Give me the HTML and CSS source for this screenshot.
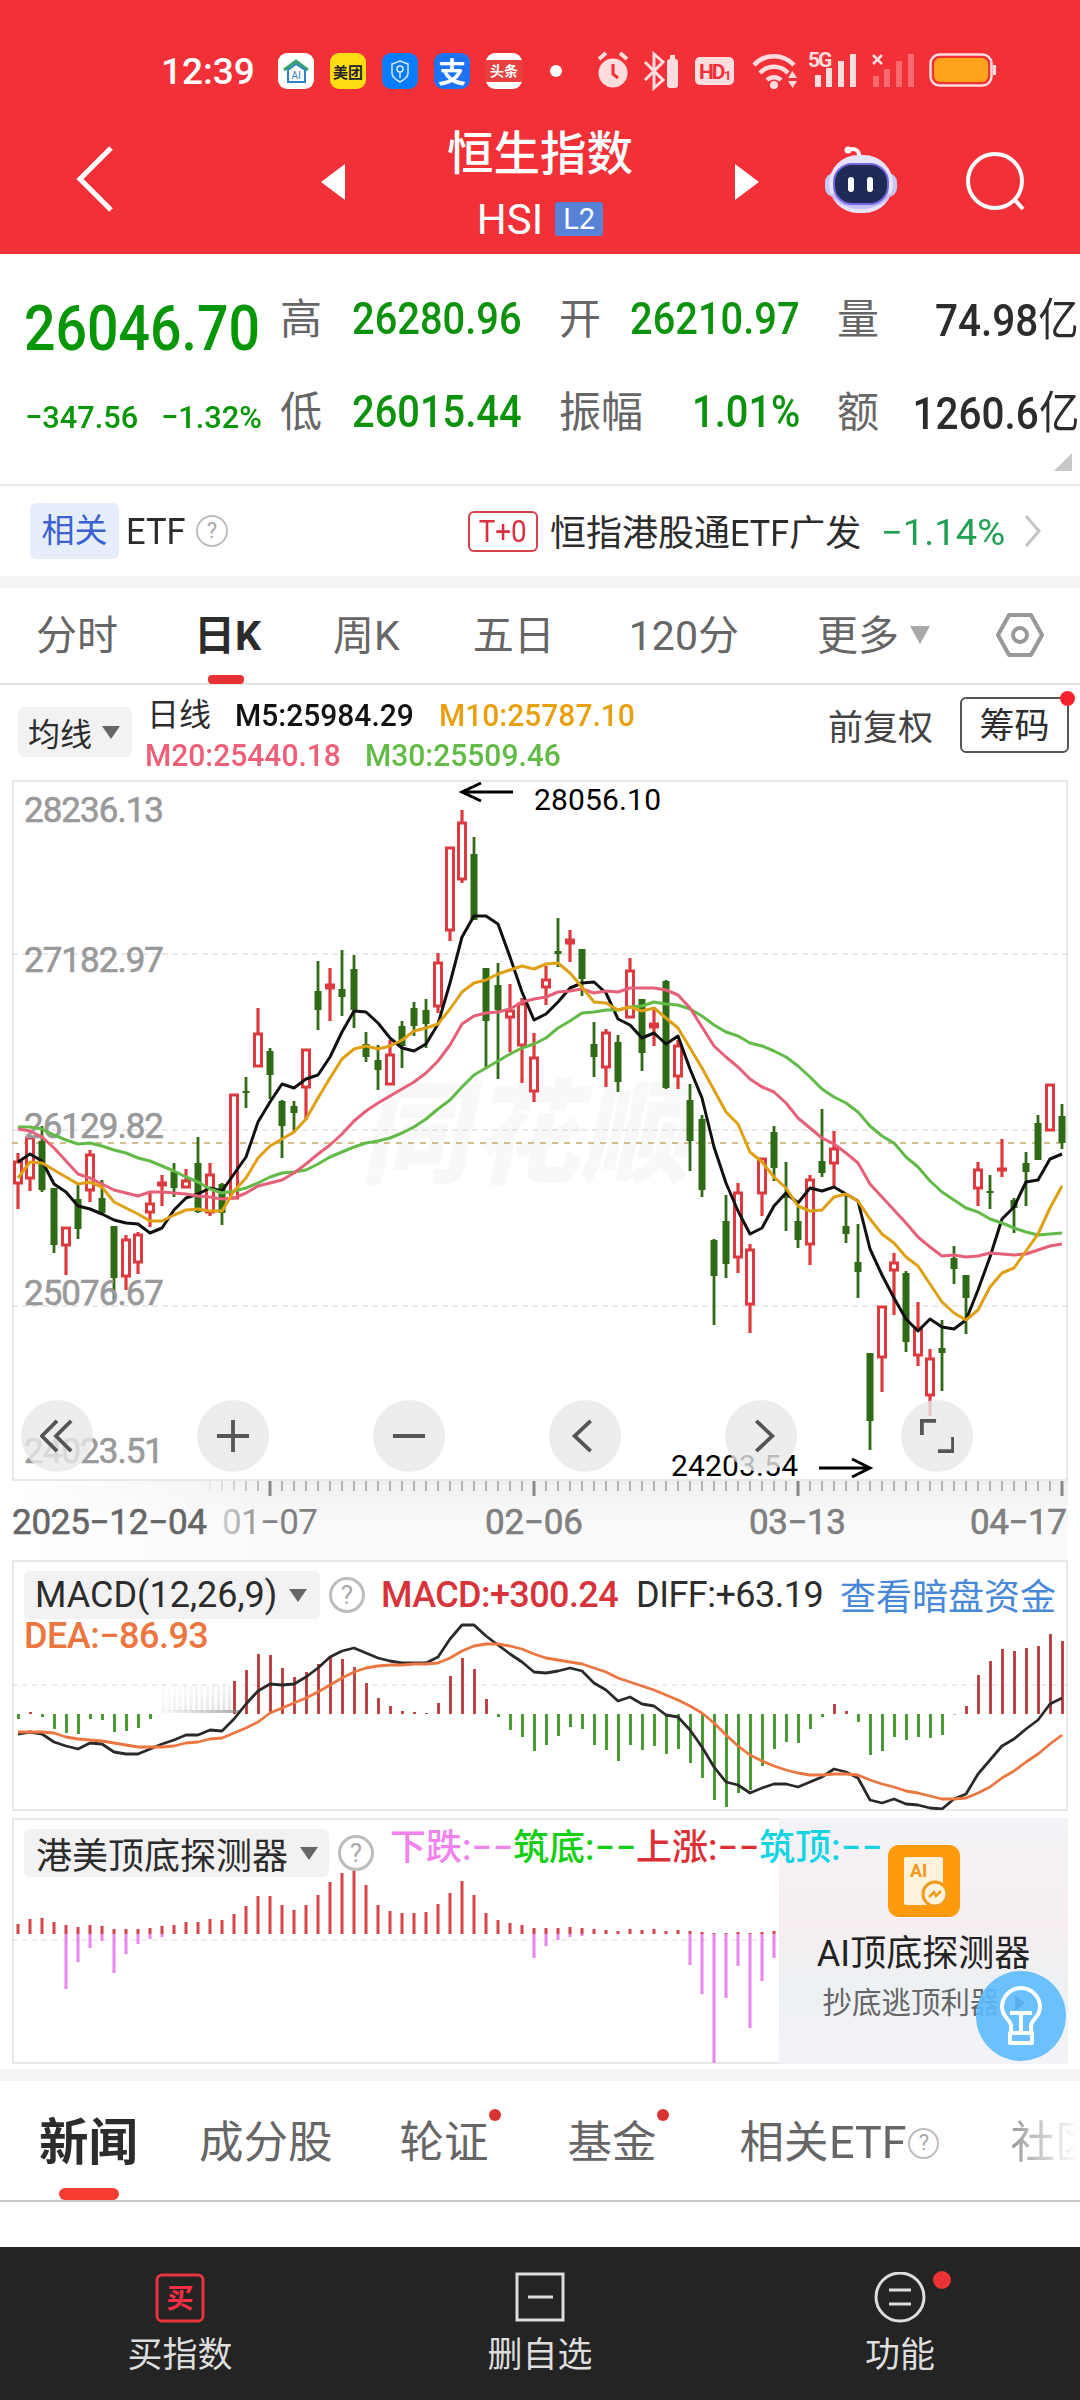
FILE: index.html
```
<!DOCTYPE html>
<html lang="zh-CN">
<head>
    <meta charset="UTF-8">
    <meta name="viewport" content="width=device-width, initial-scale=1.0">
    <title>恒生指数 HSI</title>
    <link rel="stylesheet" href="styles.css">
</head>
<body>
    <header class="header">
        <div class="status-bar">
            <span class="clock">12:39</span>
            <div class="app-icons">
                <span class="app app-ai">
                    <svg viewBox="0 0 36 36"><path d="M6 17 18 8l12 9" fill="none" stroke="#36a36b" stroke-width="3"/><path d="M10 17v12h17V17L18 11z" fill="none" stroke="#2f83c8" stroke-width="2"/><text x="18" y="26" font-size="10" text-anchor="middle" fill="#2f83c8">AI</text></svg>
                </span>
                <span class="app app-meituan">美团</span>
                <span class="app app-map">
                    <svg viewBox="0 0 36 36"><path d="M18 8l8 3v9c0 4-4 7-8 9-4-2-8-5-8-9v-9z" fill="none" stroke="#d5eaff" stroke-width="1.5"/><circle cx="18" cy="16" r="3" fill="none" stroke="#d5eaff" stroke-width="1.5"/><path d="M18 19v6" stroke="#d5eaff" stroke-width="1.5"/></svg>
                </span>
                <span class="app app-alipay">支</span>
                <span class="app app-toutiao"><b>头条</b></span>
            </div>
            <span class="status-dot"></span>
            <svg class="system-icons" viewBox="0 0 410 44">
                <g fill="#ffdcdd">
                    <!-- alarm -->
                    <circle cx="21" cy="24" r="14.5"/>
                    <path d="M7 10l7-6M35 10l-7-6" stroke="#ffdcdd" stroke-width="4"/>
                    <path d="M21 15v10l5 4" stroke="#f03038" stroke-width="3" fill="none"/>
                    <!-- bluetooth -->
                    <path d="M53 13l18 18-9 8V5l9 8-18 18" fill="none" stroke="#ffdcdd" stroke-width="3"/>
                    <rect x="75" y="10" width="11" height="29" rx="3"/>
                    <rect x="78" y="6" width="5" height="4"/>
                    <!-- hd -->
                    <rect x="103" y="8" width="39" height="28" rx="5"/>
                    <text class="hd-text" x="107" y="30">HD</text>
                    <text class="hd-sub" x="132" y="31">1</text>
                    <!-- wifi -->
                    <path d="M162 16a27 27 0 0 1 40 0M168 24a19 19 0 0 1 28 0M175 31a10 10 0 0 1 14 0" fill="none" stroke="#ffdcdd" stroke-width="4.5"/>
                    <circle cx="182" cy="36" r="4"/>
                    <path d="M196 29h9l-4.500-7zM196 32h9l-4.500 7z"/>
                    <!-- signal -->
                    <text class="g5" x="216" y="18">5G</text>
                    <rect x="223" y="26" width="6" height="12"/>
                    <rect x="234" y="19" width="6" height="19"/>
                    <rect x="246" y="12" width="6" height="26"/>
                    <rect x="258" y="5" width="6" height="33"/>
                    <path d="M281 6l9 9M290 6l-9 9" stroke="#ffdcdd" stroke-width="2.500"/>
                </g>
                <g fill="#f86a70">
                    <rect x="281" y="27" width="6" height="11"/>
                    <rect x="292" y="20" width="6" height="18"/>
                    <rect x="304" y="12" width="6" height="26"/>
                    <rect x="316" y="5" width="6" height="33"/>
                </g>
                <rect x="338.500" y="5.500" width="61" height="31" rx="9" fill="none" stroke="#ffdcdd" stroke-width="2.500"/>
                <rect x="342" y="9" width="54" height="24" rx="6" fill="#ffa31a"/>
                <path d="M402.500 16v10" stroke="#ffdcdd" stroke-width="3"/>
            </svg>
        </div>
        <div class="title-bar">
            <svg class="back" viewBox="0 0 40 68"><path d="M36 3 5 34l31 31" fill="none" stroke="#fff" stroke-width="5"/></svg>
            <svg class="prev" viewBox="0 0 24 36"><path d="M0 18 24 0v36z" fill="#fff"/></svg>
            <div class="title">
                <h1>恒生指数</h1>
                <div class="code">HSI <span class="level">L2</span></div>
            </div>
            <svg class="next" viewBox="0 0 24 36"><path d="M24 18 0 0v36z" fill="#fff"/></svg>
            <svg class="robot" viewBox="0 0 72 68">
                <path d="M23 4c8-3 11 1 12 8" fill="none" stroke="#fff" stroke-width="4"/>
                <circle cx="23" cy="4" r="3.500" fill="#fff"/>
                <rect x="0" y="27" width="72" height="24" rx="9" fill="#c9c6f2"/>
                <rect x="4" y="9" width="64" height="58" rx="29" fill="#e6e4fa"/>
                <path d="M6 48a31 20 0 0 0 60 0" fill="#c4bff5"/>
                <rect x="9" y="18" width="54" height="40" rx="18" fill="#1f2b56" stroke="#7668e0" stroke-width="2"/>
                <rect x="23" y="31" width="6" height="15" rx="3" fill="#fff"/>
                <rect x="42" y="31" width="6" height="15" rx="3" fill="#fff"/>
            </svg>
            <svg class="search" viewBox="0 0 64 64"><circle cx="31" cy="31" r="27" fill="none" stroke="#fff" stroke-width="4"/><path d="M50 49l9 10" stroke="#fff" stroke-width="4"/></svg>
        </div>
    </header>

    <section class="quote">
        <div class="last">
            <div class="price num">26046.70</div>
            <div class="change"><span class="num">−347.56</span><span class="num">−1.32%</span></div>
        </div>
        <div class="quote-grid">
            <div class="cell"><span>高</span><b class="num down">26280.96</b></div>
            <div class="cell"><span>开</span><b class="num down">26210.97</b></div>
            <div class="cell"><span>量</span><b class="num wide">74.98<i>亿</i></b></div>
            <div class="cell"><span>低</span><b class="num down">26015.44</b></div>
            <div class="cell"><span>振幅</span><b class="num down">1.01%</b></div>
            <div class="cell"><span>额</span><b class="num wide">1260.6<i>亿</i></b></div>
        </div>
        <span class="corner"></span>
    </section>

    <section class="etf-row">
        <span class="tag">相关</span>
        <span class="etf num">ETF</span>
        <span class="help">?</span>
        <span class="t0"><span class="num">T+0</span></span>
        <span class="etf-name">恒指港股通<span class="num">ETF</span>广发</span>
        <span class="etf-change num">−1.14%</span>
        <svg class="chevron" viewBox="0 0 18 34"><path d="M2 2l13 15L2 32" fill="none" stroke="#c4c4c4" stroke-width="3"/></svg>
    </section>

    <nav class="period-tabs">
        <a>分时</a>
        <a class="active">日K</a>
        <a>周K</a>
        <a>五日</a>
        <a>120分</a>
        <a>更多<i class="caret"></i></a>
        <svg viewBox="0 0 48 46"><path d="M13 3h22l11 20-11 20H13L2 23z" fill="none" stroke="#999" stroke-width="4" stroke-linejoin="round"/><circle cx="24" cy="23" r="7" fill="none" stroke="#999" stroke-width="4"/></svg>
    </nav>

    <section class="ma-bar">
        <span class="select ma-select">均线<i class="caret dark"></i></span>
        <div class="ma-values">
            <div><span class="ma-name">日线</span><span class="num m5">M5:25984.29</span><span class="num m10">M10:25787.10</span></div>
            <div><span class="num m20">M20:25440.18</span><span class="num m30">M30:25509.46</span></div>
        </div>
        <span class="adjust">前复权</span>
        <span class="chips">筹码</span>
    </section>

    <section class="kline">
        <svg id="kline" width="1056" height="702" viewBox="0 0 1056 702"></svg>
        <div class="tools">
            <button><svg viewBox="0 0 36 36"><path d="M18 2 2 18l16 16M33 2 17 18l16 16"/></svg></button>
            <button><svg viewBox="0 0 36 36"><path d="M18 1v34M1 18h34"/></svg></button>
            <button><svg viewBox="0 0 36 36"><path d="M1 18h34"/></svg></button>
            <button><svg viewBox="0 0 36 36"><path d="M24 2 7 18l17 16"/></svg></button>
            <button><svg viewBox="0 0 36 36"><path d="M13 2l17 16-17 16"/></svg></button>
            <button><svg viewBox="0 0 36 36"><path d="M2 17V2h15M35 19v15H19"/></svg></button>
        </div>
    </section>
    <section class="dates">
        <svg id="ruler" width="1056" height="80" viewBox="0 0 1056 80"></svg>
    </section>

    <section class="panel macd">
        <svg id="macd" width="1056" height="250" viewBox="0 0 1056 250"></svg>
        <div class="panel-head">
            <span class="select">MACD(12,26,9)<i class="caret dark"></i></span>
            <span class="help">?</span>
            <span class="macd-value">MACD:+300.24</span>
            <span class="diff-value">DIFF:+63.19</span>
            <a class="link">查看暗盘资金</a>
        </div>
        <div class="dea-value">DEA:−86.93</div>
    </section>

    <section class="panel detector">
        <svg id="detector" width="1056" height="246" viewBox="0 0 1056 246"></svg>
        <div class="promo">
            <svg class="promo-icon" viewBox="0 0 72 72">
                <rect width="72" height="72" rx="11" fill="#ff9a0c"/>
                <rect x="16" y="12" width="39" height="48" rx="2" fill="#fff3dc"/>
                <text x="22" y="32" font-size="18" font-weight="700" fill="#f09a1a">AI</text>
                <circle cx="47" cy="49" r="12" fill="#fff3dc" stroke="#f09a1a" stroke-width="3"/>
                <path d="M41 52l5-5 2 4 5-5" fill="none" stroke="#f09a1a" stroke-width="2.500"/>
            </svg>
            <strong>AI顶底探测器</strong>
            <small>抄底逃顶利器<i></i></small>
        </div>
        <div class="panel-head">
            <span class="select">港美顶底探测器<i class="caret dark"></i></span>
            <span class="help">?</span>
            <div class="signals">
                <span class="fall">下跌:<em>−−</em></span>
                <span class="bottom">筑底:<em>−−</em></span>
                <span class="rise">上涨:<em>−−</em></span>
                <span class="top">筑顶:<em>−−</em></span>
            </div>
        </div>
        <span class="bulb">
            <svg viewBox="0 0 44 60" fill="none" stroke="#fff" stroke-width="4"><path d="M12 47V40C12 34 3 31 3 21a19 19 0 0 1 38 0c0 10-9 13-9 19v7M11 27h22M22 27v20M11 47h22v10H11z" stroke-linejoin="round"/></svg>
        </span>
    </section>

    <nav class="news-tabs">
        <a class="active">新闻</a>
        <a>成分股</a>
        <a class="dot">轮证</a>
        <a class="dot">基金</a>
        <a>相关<span class="num">ETF</span><span class="help">?</span></a>
        <a class="faded">社区</a>
    </nav>

    <footer class="bottom-bar">
        <a>
            <svg viewBox="0 0 52 52"><rect x="3" y="3" width="46" height="46" rx="5" fill="none" stroke="#e8343c" stroke-width="3"/><text x="26" y="36" font-size="27" font-weight="700" text-anchor="middle" fill="#ff2d45">买</text></svg>
            买指数
        </a>
        <a>
            <svg viewBox="0 0 52 52" stroke="#ddd" stroke-width="3"><rect x="3" y="2" width="46" height="46" fill="none"/><path d="M14 25h25"/></svg>
            删自选
        </a>
        <a class="dot">
            <svg viewBox="0 0 52 52" stroke="#ddd" stroke-width="3"><circle cx="26" cy="25" r="24" fill="none"/><path d="M15 18h22M15 32h22"/></svg>
            功能
        </a>
    </footer>
    <script src="chart.js"></script>
</body>
</html>
```
FILE: styles.css
```
* {
    margin: 0;
    padding: 0;
    box-sizing: border-box;
}

body {
    width: 1080px;
    height: 2400px;
    overflow: hidden;
    background: #fff;
    color: #2c2c2c;
    font-family: Roboto, "Noto Sans CJK SC", sans-serif;
    white-space: nowrap;
}

i, em {
    font-style: normal;
}

/* narrow figures */
.num {
    display: inline-block;
    transform: scaleX(0.895);
    transform-origin: left center;
}

.caret {
    display: inline-block;
    border: 10px solid transparent;
    border-top: 18px solid #a8a8a8;
    border-bottom: 0;
}

.caret.dark {
    border-width: 13px 9px 0;
    border-top-color: #666;
}

.help {
    display: inline-flex;
    align-items: center;
    justify-content: center;
    width: 36px;
    height: 36px;
    border: 3px solid #bdbdbd;
    border-radius: 50%;
    color: #aaa;
    font-size: 26px;
    line-height: 1;
}

/* header */
.header {
    height: 254px;
    background: #f23038;
    color: #fff;
}

.status-bar {
    display: flex;
    align-items: center;
    height: 142px;
    padding-left: 161px;
}

.clock {
    width: 117px;
    font-size: 37px;
    font-weight: 500;
}

.app-icons {
    display: flex;
    gap: 16px;
}

.app {
    display: flex;
    align-items: center;
    justify-content: center;
    width: 36px;
    height: 36px;
    border-radius: 9px;
    overflow: hidden;
}

.app-ai {
    background: #fff;
}

.app-meituan {
    background: #ffdd14;
    color: #222;
    font-size: 15px;
    font-weight: 700;
}

.app-map {
    background: #0a7cff;
}

.app-alipay {
    background: #1c74f4;
    font-size: 28px;
    font-weight: 700;
}

.app-toutiao {
    background: #fff;
}

.app-toutiao b {
    width: 36px;
    background: #e8403e;
    font-size: 14px;
    line-height: 22px;
    text-align: center;
}

.status-dot {
    width: 12px;
    height: 12px;
    margin: 0 29px 0 28px;
    border-radius: 50%;
    background: #fff;
}

.system-icons {
    width: 410px;
    height: 44px;
    margin-left: 1px;
    overflow: visible;
}

.hd-text {
    fill: #f23038;
    font-size: 21px;
    font-weight: 700;
    letter-spacing: -2px;
}

.hd-sub {
    fill: #f23038;
    font-size: 13px;
    font-weight: 700;
}

.g5 {
    font-size: 21px;
    font-weight: 700;
    letter-spacing: -2px;
}

.title-bar {
    display: flex;
    height: 112px;
    padding-left: 75px;
}

.back {
    width: 40px;
    height: 68px;
    margin-top: 3px;
}

.prev,
.next {
    width: 24px;
    height: 36px;
    margin-top: 22px;
}

.prev {
    margin-left: 206px;
}

.title {
    width: 390px;
    text-align: center;
    margin-top: -22px;
}

.title h1 {
    font-size: 46.5px;
    font-weight: 500;
    line-height: 68px;
}

.code {
    display: flex;
    align-items: center;
    justify-content: center;
    gap: 12px;
    height: 62px;
    font-size: 42px;
}

.level {
    width: 48px;
    height: 34px;
    border-radius: 3px;
    background: #5682d8;
    font-size: 29px;
    line-height: 35px;
}

.robot {
    width: 72px;
    height: 68px;
    margin: 4px 0 0 66px;
}

.search {
    width: 64px;
    height: 64px;
    margin: 8px 0 0 67px;
}

/* quote */
.quote {
    position: relative;
    display: flex;
    height: 232px;
    padding: 17px 0 0 26px;
    border-bottom: 2px solid #ebebeb;
}

.last {
    width: 254px;
    color: #069606;
    font-weight: 500;
}

.price {
    height: 93px;
    margin-left: -2px;
    font-size: 63px;
    line-height: 115px;
    transform: scaleX(0.88);
}

.change {
    display: flex;
    margin-left: -1px;
    font-size: 32px;
    line-height: 106px;
}

.change .num {
    flex: none;
    width: 136px;
    transform: scaleX(0.96);
}

.quote-grid {
    display: grid;
    grid-template-columns: 242px 241px 242px;
    grid-auto-rows: 93px;
    column-gap: 37px;
}

.cell {
    display: flex;
    justify-content: space-between;
    align-items: center;
    color: #666;
    font-size: 42px;
}

.cell span {
    margin-top: -4px;
}

.cell .num {
    color: #2c2c2c;
    font-size: 45px;
    font-weight: 500;
    transform: scaleX(0.885);
    transform-origin: right center;
}

.cell .wide {
    margin-top: -3px;
    transform: scaleX(0.9);
}

.cell .num i {
    font-weight: 400;
}

.cell .down {
    margin-top: 1px;
    color: #0d920d;
}

.corner {
    position: absolute;
    right: 8px;
    bottom: 13px;
    border: 9px solid #c8c8c8;
    border-top-color: transparent;
    border-left-color: transparent;
}

/* related etf */
.etf-row {
    display: flex;
    align-items: center;
    height: 102px;
    padding: 0 0 0 30px;
    border-bottom: 12px solid #f4f4f4;
    font-size: 36px;
}

.tag {
    width: 89px;
    margin-right: 7px;
    border-radius: 6px;
    background: #e6edfb;
    color: #3b62cf;
    font-size: 33px;
    line-height: 56px;
    text-align: center;
}

.etf {
    width: 70px;
    margin-top: 2px;
    transform: scaleX(0.96);
}

.etf-row .help {
    width: 32px;
    height: 32px;
    border-width: 2px;
    font-size: 22px;
}

.t0 {
    width: 70px;
    height: 41px;
    margin: 0 12px 0 240px;
    border: 2px solid #d8404a;
    border-radius: 6px;
    color: #d8303c;
    font-size: 31px;
    line-height: 37px;
    text-align: center;
}

.t0 .num {
    transform-origin: center;
}

.etf-name {
    width: 331px;
    margin-top: -2px;
}

.etf-name .num {
    margin-right: -3px;
    transform: scaleX(0.95);
}

.etf-change {
    width: 143px;
    margin-top: 3px;
    color: #1fa052;
    transform: scaleX(1.06);
}

.chevron {
    width: 18px;
    height: 34px;
}

/* period tabs */
.period-tabs {
    display: flex;
    align-items: center;
    gap: 74px;
    height: 97px;
    padding-left: 36px;
    border-bottom: 2px solid #e4e4e4;
    color: #666;
    font-size: 41px;
    line-height: 60px;
}

.period-tabs a,
.news-tabs a {
    position: relative;
}

.period-tabs .caret {
    margin: 0 0 6px 11px;
}

.period-tabs .active {
    margin-left: 2px;
    margin-right: -2px;
    color: #2c2c2c;
    font-weight: 700;
}

.period-tabs .active::after {
    content: "";
    position: absolute;
    left: 14px;
    bottom: -18px;
    width: 36px;
    height: 9px;
    border-radius: 4px;
    background: #e63232;
}

.period-tabs a:nth-child(4) {
    margin-left: -1px;
}

.period-tabs a:nth-child(6) {
    margin-left: 4px;
}

.period-tabs svg {
    width: 48px;
    height: 46px;
    margin: -1px 0 0 -8px;
}

/* moving averages */
.ma-bar {
    display: flex;
    height: 95px;
    padding-left: 18px;
    font-size: 32px;
}

.select {
    display: inline-flex;
    align-items: center;
    height: 48px;
    border-radius: 6px;
    background: #f2f2f2;
}

.ma-select {
    width: 114px;
    height: 50px;
    margin-top: 22px;
    padding-left: 10px;
}

.ma-select .caret {
    margin-left: 10px;
}

.ma-values {
    flex: none;
    width: 696px;
    padding-left: 15px;
}

.ma-values div {
    display: flex;
    height: 40px;
    line-height: 40px;
}

.ma-values div:first-child {
    margin-top: 10px;
}

.ma-values .num {
    font-weight: 500;
    transform: scaleX(0.937);
}

.ma-name {
    width: 88px;
}

.m5 {
    width: 204px;
    color: #111;
}

.m10 {
    color: #e8a010;
}

.m20 {
    width: 220px;
    margin-left: -2px;
    color: #ee5f78;
}

.m30 {
    color: #62bb46;
}

.adjust {
    width: 132px;
    color: #444;
    font-size: 35px;
    line-height: 88px;
}

.chips {
    position: relative;
    flex: none;
    width: 109px;
    height: 56px;
    margin-top: 12px;
    border: 2px solid #555;
    border-radius: 6px;
    font-size: 35px;
    line-height: 56px;
    text-align: center;
}

.chips::after,
.dot::after {
    content: "";
    position: absolute;
    top: -8px;
    right: -8px;
    width: 15px;
    height: 15px;
    border-radius: 50%;
    background: #f8222e;
}

/* charts */
.kline {
    position: relative;
    height: 700px;
    margin: 0 12px;
}

.kline svg,
.dates svg,
.panel svg {
    display: block;
}

.scale {
    fill: #999;
    font-size: 35px;
}

.peak {
    fill: #000;
    font-size: 30px;
}

.watermark {
    fill: #f8f8f8;
    font-size: 112px;
    font-weight: 900;
}

.tools {
    position: absolute;
    left: 9px;
    bottom: 8px;
    display: flex;
    gap: 104px;
}

.tools button {
    display: flex;
    align-items: center;
    justify-content: center;
    width: 72px;
    height: 72px;
    border: 0;
    border-radius: 50%;
    background: rgba(232, 232, 232, 0.8);
}

.tools svg {
    width: 34px;
    height: 34px;
    fill: none;
    stroke: #555;
    stroke-width: 4;
}

.dates {
    height: 80px;
    margin: 0 12px;
    background: linear-gradient(90deg, #fff, transparent 25%), linear-gradient(#f1f1f1, #fafafa 60%);
}

.date {
    fill: #808080;
    stroke: #808080;
    stroke-width: 0.6;
    font-size: 35px;
}

.date.first {
    fill: #666;
    stroke: #666;
}

.date.fading {
    fill: url(#fade);
    stroke: none;
}

.panel {
    position: relative;
    height: 251px;
    margin: 0 12px 7px;
    border: 2px solid #e8e8e8;
    font-size: 36px;
}

.panel > svg {
    position: absolute;
    left: -2px;
    top: -2px;
}

.panel-head {
    position: relative;
    display: flex;
    align-items: center;
    height: 48px;
    margin: 9px 0 0 10px;
}

.macd .select {
    width: 296px;
    padding-left: 11px;
}

.panel .caret {
    margin-left: 12px;
}

.panel .help {
    margin: 0 16px 0 9px;
}

.macd-value {
    width: 255px;
    color: #d8333a;
    letter-spacing: -0.6px;
    font-weight: 500;
}

.diff-value {
    width: 204px;
    letter-spacing: -0.5px;
}

.link {
    color: #4788d8;
}

.macd .link {
    margin-top: -3px;
}

.dea-value {
    position: relative;
    margin-left: 10px;
    color: #ec7640;
    font-weight: 500;
    letter-spacing: -0.5px;
    line-height: 35px;
}

.detector {
    height: 246px;
    margin-bottom: 5px;
}

.detector .select {
    width: 305px;
    padding-left: 12px;
}

.signals {
    display: flex;
    margin: -10px 0 0 0;
}

.signals span {
    display: flex;
    align-items: center;
    width: 123px;
    font-weight: 500;
    line-height: 46px;
}

.signals em {
    letter-spacing: 1px;
}

.fall {
    color: #f283ee;
}

.bottom {
    color: #14cf14;
}

.rise {
    color: #dc3036;
}

.top {
    color: #14d3e3;
}

.promo {
    position: absolute;
    top: -2px;
    right: -2px;
    display: flex;
    flex-direction: column;
    align-items: center;
    width: 289px;
    height: 246px;
    background: linear-gradient(#f4f3f7 0, #f6eef1 45%, #edf1f3 68%, #f4f3f8);
}

.promo-icon {
    width: 72px;
    height: 72px;
    margin-top: 27px;
}

.promo strong {
    margin-top: 15px;
    color: #222;
    font-weight: 400;
    line-height: 44px;
}

.promo small {
    display: flex;
    align-items: center;
    margin: 8px 0 0 0;
    color: #666;
    font-size: 29.5px;
    line-height: 38px;
}

.promo small i {
    margin-left: 15px;
    border: 8px solid transparent;
    border-left: 10px solid #333;
    border-right: 0;
}

.bulb {
    position: absolute;
    right: 0;
    bottom: 1px;
    display: flex;
    align-items: center;
    justify-content: center;
    width: 90px;
    height: 90px;
    border-radius: 50%;
    background: rgba(92, 186, 255, 0.9);
}

.bulb svg {
    width: 44px;
    height: 60px;
}

/* news tabs */
.news-tabs {
    display: flex;
    align-items: center;
    height: 133px;
    padding-left: 39px;
    border-top: 12px solid #f4f4f4;
    border-bottom: 2px solid #c2c8c8;
    color: #666;
    font-size: 44.5px;
}

.news-tabs a {
    flex: none;
    padding-top: 5px;
    margin-right: 79px;
    line-height: 114px;
}

.news-tabs .active {
    margin-right: 61px;
    color: #2c2c2c;
    font-size: 49.5px;
    font-weight: 700;
}

.news-tabs a:nth-child(2) {
    margin-right: 67px;
}

.news-tabs a:nth-child(5) {
    display: flex;
    align-items: center;
    margin: 0 71px 0 4px;
}

.news-tabs .num {
    margin-right: 3px;
    transform: scaleX(1.01);
}

.news-tabs .active::after {
    content: "";
    position: absolute;
    left: 20px;
    bottom: 0;
    width: 60px;
    height: 12px;
    border-radius: 6px;
    background: #f83c30;
}

.news-tabs .dot::after {
    top: 28px;
    right: -12px;
    width: 12px;
    height: 12px;
    background: #d83434;
}

.news-tabs .help {
    width: 31px;
    height: 31px;
    border-width: 2px;
    font-size: 22px;
}

.news-tabs .faded {
    margin: 0;
    background: linear-gradient(90deg, #999, #fff 75%);
    -webkit-background-clip: text;
    background-clip: text;
    color: transparent;
}

/* bottom bar */
.bottom-bar {
    display: flex;
    height: 153px;
    margin-top: 45px;
    background: #242424;
    color: #ddd;
    font-size: 35px;
}

.bottom-bar a {
    position: relative;
    display: flex;
    flex: 1;
    flex-direction: column;
    align-items: center;
    padding-top: 25px;
    line-height: 64px;
}

.bottom-bar svg {
    width: 52px;
    height: 52px;
}

.bottom-bar .dot::after {
    top: 24px;
    right: 129px;
    width: 18px;
    height: 18px;
    background: #ec3434;
}
```
FILE: chart.js
```
const RED = '#dc3a3e';
const GREEN = '#2f6a16';

const x = i => 6 + 12 * i;

function line(values, color, width = 3) {
    const points = values.map((y, i) => x(i) + ',' + y).join(' ');
    return `<polyline points="${points}" fill="none" stroke="${color}" stroke-width="${width}" stroke-linejoin="round"/>`;
}

function rule(y, color, dash, width = 1) {
    return `<path d="M0 ${y}H1056" stroke="${color}" stroke-width="${width}" stroke-dasharray="${dash}"/>`;
}

// up/down, high, body top, body bottom, low
const candles = [
    ['u',373,381,404,429], ['u',357,357,399,411], ['d',346,361,410,412], ['d',408,408,465,473],
    ['u',447,447,466,495], ['d',405,419,449,459], ['u',370,374,411,422], ['d',400,418,433,435],
    ['d',446,446,498,520], ['u',455,459,497,510], ['u',452,454,483,494], ['u',413,423,433,447],
    ['u',395,402,406,426], ['d',383,392,408,417], ['u',389,400,408,408], ['d',357,383,432,433],
    ['u',383,394,433,436], ['d',403,404,433,445], ['u',314,314,419,419], ['d',297,311,313,328],
    ['u',228,253,287,287], ['d',268,271,295,319], ['d',320,321,346,378], ['d',321,326,333,352],
    ['u',269,269,308,340], ['d',181,211,230,250], ['u',188,204,209,241], ['d',170,209,217,236],
    ['d',175,189,230,248], ['d',252,264,277,282], ['d',265,280,290,310], ['u',260,274,305,305],
    ['d',241,246,266,288], ['d',222,228,246,256], ['d',219,230,244,268], ['u',173,182,227,233],
    ['u',67,67,151,161], ['u',30,42,100,103], ['d',57,74,140,140], ['d',188,188,241,288],
    ['d',183,205,230,299], ['u',204,230,238,272], ['u',218,223,266,303], ['u',253,277,312,322],
    ['u',186,199,208,225], ['d',138,171,174,187], ['u',150,159,164,182], ['d',169,169,199,216],
    ['d',242,264,277,297], ['u',249,252,288,307], ['d',255,262,302,312], ['u',178,190,238,238],
    ['d',219,219,273,291], ['u',227,243,248,266], ['d',200,201,308,309], ['u',260,265,297,309],
    ['d',304,320,361,391], ['d',335,339,410,417], ['d',459,460,496,545], ['d',415,441,484,498],
    ['u',403,412,478,493], ['u',464,469,525,553], ['u',378,378,414,436], ['d',346,352,388,401],
    ['d',382,414,418,451], ['d',427,441,460,468], ['u',395,399,465,485], ['d',329,381,393,397],
    ['u',351,368,384,407], ['d',415,446,454,463], ['d',444,482,492,518], ['d',573,573,641,670],
    ['u',526,526,578,612], ['u',473,482,491,535], ['d',491,493,562,572], ['u',522,547,576,586],
    ['u',569,578,616,636], ['d',540,568,573,611], ['d',466,478,489,504], ['d',495,495,518,554],
    ['u',382,389,409,426], ['d',395,411,413,429], ['u',359,388,391,397], ['d',418,420,428,453],
    ['d',372,383,392,426], ['d',335,343,380,380], ['u',304,304,351,351], ['d',324,336,363,369]
];

const m5 = [382,374,381,404,412,426,429,434,440,443,444,453,448,430,418,414,408,411,394,377,342,322,304,308,299,295,277,252,231,232,243,258,268,271,264,244,203,157,136,136,144,177,212,240,234,222,208,203,202,213,239,245,258,253,264,256,289,318,367,403,431,454,448,426,413,423,408,411,407,414,421,469,495,518,539,551,539,547,549,540,510,477,439,427,402,400,379,374];
const m10 = [398,382,383,390,397,404,402,407,422,428,434,441,441,435,430,429,431,431,411,398,378,366,359,352,339,318,298,279,269,266,269,266,260,251,248,244,229,212,203,200,194,190,186,189,184,183,193,207,222,223,230,227,231,228,238,248,268,288,310,332,344,372,382,397,408,426,431,430,417,414,421,439,454,463,477,486,504,522,533,540,530,507,493,488,471,454,428,406];
const m20 = [349,351,357,368,381,394,398,404,410,413,416,412,412,413,414,416,417,419,418,413,406,403,400,393,384,374,365,354,341,331,323,316,309,302,293,281,265,244,236,233,232,229,222,219,217,212,211,209,213,211,212,208,208,208,210,215,228,247,266,277,287,299,307,312,323,338,348,358,364,373,383,404,417,430,443,457,467,476,475,477,476,473,474,475,474,470,466,464];
const m30 = [347,347,349,355,360,364,363,366,370,373,378,381,386,391,397,402,409,413,411,408,403,397,393,392,390,384,377,372,367,363,361,358,353,347,339,329,320,307,295,288,281,274,268,264,258,248,241,233,232,230,230,227,226,222,224,225,229,236,245,252,256,263,266,271,277,286,297,309,317,323,332,346,356,363,377,387,401,412,420,428,432,439,443,448,452,455,454,453];

function drawKline() {
    let out = '<rect x="1" y="1" width="1054" height="699" fill="none" stroke="#e8e8e8" stroke-width="2"/>';
    out += '<text class="watermark" transform="translate(348 394) skewX(-12)" textLength="330" lengthAdjust="spacingAndGlyphs">同花顺</text>';
    out += rule(174, '#d4d4d4', '6 4') + rule(350, '#d4d4d4', '6 4') + rule(526, '#d4d4d4', '6 4');
    out += rule(363, '#c4a86a', '6 6', 1.6);
    candles.forEach(([dir, high, top, bottom, low], i) => {
        const cx = x(i);
        if (dir === 'u') {
            out += `<path d="M${cx} ${high}V${top}M${cx} ${bottom}V${low}" stroke="${RED}" stroke-width="3.2"/>`;
            out += `<rect x="${cx - 3.5}" y="${top + 1}" width="7" height="${Math.max(bottom - top - 2, 1)}" fill="${bottom - top < 6 ? RED : '#fff'}" stroke="${RED}" stroke-width="3"/>`;
        } else {
            out += `<path d="M${cx} ${high}V${low}" stroke="${GREEN}" stroke-width="2.8"/>`;
            out += `<rect x="${cx - 3.5}" y="${top}" width="7" height="${bottom - top}" fill="${GREEN}"/>`;
        }
    });
    [['28236.13', 42], ['27182.97', 192], ['26129.82', 358], ['25076.67', 525], ['24023.51', 683]].forEach(([label, y]) => {
        out += `<text class="scale" x="12" y="${y}" textLength="140" stroke="#999" stroke-width="0.6">${label}</text>`;
    });
    out += line(m5, '#111') + line(m30, '#62bb46') + line(m20, '#e6607a') + line(m10, '#dfa013');
    out += '<path d="M501 12H450M469 3 450 12l19 9" fill="none" stroke="#000" stroke-width="3"/>';
    out += '<text class="peak" x="522" y="30" textLength="127">28056.10</text>';
    out += '<path d="M807 688h51M840 679l18 9-18 9" fill="none" stroke="#000" stroke-width="3"/>';
    out += '<text class="peak" x="659" y="696" textLength="127">24203.54</text>';
    document.getElementById('kline').innerHTML = out;
}

function drawRuler() {
    let out = '';
    for (let i = 16; i < 88; i++) {
        const major = (i - 21) % 22 === 0;
        const opacity = major ? 1 : Math.min(1, (i - 15) / 6);
        out += `<path d="M${x(i)} 1V${major ? 16 : 11}" stroke="#888" stroke-width="${major ? 3 : 1.2}" opacity="${opacity}"/>`;
    }
    out += '<defs><linearGradient id="fade"><stop offset="0" stop-color="#d0d0d0"/><stop offset="0.5" stop-color="#808080"/></linearGradient></defs>';
    out += '<text class="date first" x="0" y="54" textLength="195">2025−12−04</text>';
    out += '<text class="date fading" x="210" y="54" textLength="96">01−07</text>';
    out += '<text class="date" x="473" y="54" textLength="98">02−06</text>';
    out += '<text class="date" x="737" y="54" textLength="97">03−13</text>';
    out += '<text class="date" x="958" y="54" textLength="97">04−17</text>';
    document.getElementById('ruler').innerHTML = out;
}

const bars = [159,152,157,169,173,174,159,160,172,171,168,159,null,null,null,null,null,null,121,110,94,95,108,117,112,104,97,99,107,123,138,146,151,152,153,143,116,98,109,139,157,170,177,191,185,176,167,169,185,190,201,185,190,186,194,189,203,218,240,247,233,230,206,189,182,183,169,157,144,151,162,195,191,177,180,177,178,175,154.5,146,115,101,89,91,88,86,74,81];
const diff = [174,172,174,182,186,189,183,184,192,194,194,189,184,180,175,175,170,171,159,144,131,124,125,124,117,108,97,91,88,93,98,101,103,103,103,97,79,65,65,76,85,94,102,112,113,111,108,111,123,130,141,137,144,146,155,157,170,187,207,222,225,233,228,224,224,227,222,217,209,212,218,240,243,239,244,245,248,249,239,234,214,200,186,179,169,160,144,138];
const dea = [172,172,172,173,177,179,180,181,183,185,187,187,187,186,183,182,179,178,173,168,162,153,148,143,138,132,125,118,112,108,106,105,105,104,104,103,98,91,86,84,84,86,89,94,98,100,102,104,108,112,118,122,126,130,135,140,146,153,163,175,186,195,201,206,210,213,215,215,214,214,215,220,224,227,231,233,236,239,239,238,233,227,218,211,202,194,184,175];

function drawMacd() {
    let out = rule(125, '#dcdcdc', '5 5');
    bars.forEach((y, i) => {
        if (y === null) return;
        out += `<path d="M${x(i) + 0.5} 154V${y}" stroke="${y < 154 ? '#b8393b' : '#3e9428'}" stroke-width="2.8"/>`;
    });
    out += '<defs><linearGradient id="ghost"><stop offset="0" stop-color="#999" stop-opacity="0"/><stop offset="1" stop-color="#888" stop-opacity="0.7"/></linearGradient>';
    out += '<linearGradient id="smear" x2="0" y2="1"><stop offset="0" stop-color="#ccc" stop-opacity="0.2"/><stop offset="1" stop-color="#bbb" stop-opacity="0.5"/></linearGradient></defs>';
    for (let i = 0; i < 13; i++) {
        out += `<rect x="${150 + i * 5.5}" y="125" width="3" height="26" fill="url(#smear)" opacity="${0.3 + i * 0.05}"/>`;
    }
    out += '<rect x="145" y="150" width="84" height="3" fill="url(#ghost)"/>';
    out += line(diff, '#2a2a2a', 2.8) + line(dea, '#ec7640', 2.8);
    document.getElementById('macd').innerHTML = out;
}

const risk = [106,101,100,104,107,109,107,108,111,111,111,110,108,107,104,104,101,102,96,88,78,78,87,92,87,77,64,55,52,67,87,93,95,95,94,86,75,63,77,95,102,105,107,110,110,110,109,110,111,112,113,111,112,111,113,112,113,114,115,115,114,115,114,113];
const drops = {4:171,5:144,6:130,7:123,8:155,9:136,10:126,11:121,12:119,43:140,44:128,45:122,46:119,47:118,56:147,57:176,58:245,59:180,60:148,61:210,62:163,63:140};

function drawDetector() {
    let out = rule(122, '#dcdcdc', '5 5');
    risk.forEach((y, i) => {
        out += `<path d="M${x(i)} ${y}V116" stroke="#d4444a" stroke-width="3"/>`;
        if (drops[i]) out += `<path d="M${x(i)} 116V${drops[i]}" stroke="#e884ec" stroke-width="3"/>`;
    });
    document.getElementById('detector').innerHTML = out;
}

drawKline();
drawRuler();
drawMacd();
drawDetector();
```
